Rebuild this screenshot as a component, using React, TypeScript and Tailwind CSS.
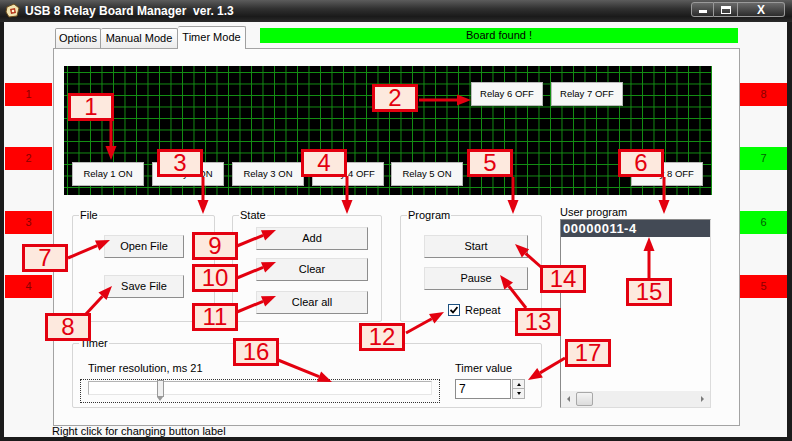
import type { ReactNode } from 'react';

const relays = [
  { label: 'Relay 1 ON', x: 8, y: 96 },
  { label: 'Relay 2 ON', x: 88, y: 96 },
  { label: 'Relay 3 ON', x: 168, y: 96 },
  { label: 'Relay 4 OFF', x: 248, y: 96 },
  { label: 'Relay 5 ON', x: 327, y: 96 },
  { label: 'Relay 6 OFF', x: 407, y: 16 },
  { label: 'Relay 7 OFF', x: 487, y: 16 },
  { label: 'Relay 8 OFF', x: 567, y: 96 },
];

const callouts = [
  { n: 1, x: 68, y: 93 },
  { n: 2, x: 372, y: 84 },
  { n: 3, x: 157, y: 149 },
  { n: 4, x: 301, y: 149 },
  { n: 5, x: 467, y: 149 },
  { n: 6, x: 618, y: 149 },
  { n: 7, x: 22, y: 244 },
  { n: 8, x: 45, y: 313 },
  { n: 9, x: 192, y: 232 },
  { n: 10, x: 192, y: 264 },
  { n: 11, x: 192, y: 303 },
  { n: 12, x: 359, y: 323 },
  { n: 13, x: 515, y: 308 },
  { n: 14, x: 540, y: 265 },
  { n: 15, x: 626, y: 278 },
  { n: 16, x: 233, y: 338 },
  { n: 17, x: 565, y: 339 },
];

const arrows: [number, number, number, number][] = [
  [111, 121, 111, 160],
  [419, 100, 471, 100],
  [203, 177, 203, 214],
  [347, 176, 347, 214],
  [513, 177, 513, 214],
  [664, 177, 664, 214],
  [68, 258, 110, 240],
  [86, 314, 112, 286],
  [237, 246, 276, 230],
  [237, 278, 276, 262],
  [237, 312, 276, 296],
  [406, 333, 444, 312],
  [526, 308, 500, 275],
  [541, 267, 515, 244],
  [649, 278, 649, 237],
  [278, 360, 332, 382],
  [565, 358, 528, 380],
];

const Arrow = ({ a }: { a: [number, number, number, number] }) => {
  const [x1, y1, x2, y2] = a;
  const len = Math.hypot(x2 - x1, y2 - y1);
  const ux = (x2 - x1) / len;
  const uy = (y2 - y1) / len;
  const bx = x2 - ux * 14;
  const by = y2 - uy * 14;
  const pts = `${x2},${y2} ${bx - uy * 5.5},${by + ux * 5.5} ${bx + uy * 5.5},${by - ux * 5.5}`;
  return (
    <g>
      <line x1={x1} y1={y1} x2={bx} y2={by} stroke="#e3000f" strokeWidth={3} />
      <polygon points={pts} fill="#e3000f" />
    </g>
  );
};

const Btn = ({ children, className = '' }: { children: ReactNode; className?: string }) => (
  <div
    className={`flex h-[23px] items-center justify-center border border-t-[#e2e2e2] border-l-[#e2e2e2] border-r-[#8d8d8d] border-b-[#8d8d8d] bg-[#f3f3f3] text-[11px] ${className}`}
  >
    {children}
  </div>
);

const Group = ({ label, className = '', children }: { label: string; className?: string; children?: ReactNode }) => (
  <div className={`relative rounded-[2px] border border-[#d6d6d6] ${className}`}>
    <span className="absolute -top-[8px] left-[6px] bg-[#fcfcfc] px-[1px] text-[11px] leading-[14px]">{label}</span>
    {children}
  </div>
);

const Indicator = ({ n, on }: { n: number; on?: boolean }) => (
  <div
    className={`flex h-[23px] items-center justify-center text-[11px] ${on ? 'bg-[#00ff00] text-[#006000]' : 'bg-[#ff0000] text-[#8a0000]'}`}
  >
    {n}
  </div>
);

const AppIcon = () => (
  <svg width="16" height="16" viewBox="0 0 16 16">
    <path d="M2 4 L9 1 L14 5 L12 13 L4 14 L1 9 Z" fill="#f1e3b0" stroke="#6b4a1a" strokeWidth="1" />
    <path d="M5 6 L10 5 L11 10 L6 11 Z" fill="#b5361c" />
    <circle cx="8" cy="8" r="1.3" fill="#fff6d0" />
  </svg>
);

const TitleBar = () => (
  <div className="flex h-[22px] items-start bg-[linear-gradient(to_bottom,#5c5c5c,#303030_40%,#1a1a1a_75%,#2a2a2a)] pl-[5px] pr-[7px]">
    <div className="mt-[3px]">
      <AppIcon />
    </div>
    <span className="ml-[4px] mt-[4px] whitespace-pre text-[12px] font-bold leading-[14px] text-white">
      USB 8 Relay Board Manager  ver. 1.3
    </span>
    <div className="ml-auto mt-[2px] flex h-[15px]">
      <div className="flex w-[23px] items-end justify-center rounded-l-[3px] border border-[#9a9a9a] bg-[linear-gradient(to_bottom,#6a6a6a,#2c2c2c)] pb-[3px]">
        <div className="h-[3px] w-[8px] bg-white" />
      </div>
      <div className="flex w-[24px] items-center justify-center border border-l-0 border-[#9a9a9a] bg-[linear-gradient(to_bottom,#6a6a6a,#2c2c2c)]">
        <div className="h-[8px] w-[10px] border border-t-[3px] border-white" />
      </div>
      <div className="flex w-[47px] items-center justify-center rounded-r-[3px] border border-l-0 border-[#9a9a9a] bg-[linear-gradient(to_bottom,#6a6a6a,#2c2c2c)] text-[12px] font-bold leading-none text-white">
        X
      </div>
    </div>
  </div>
);

export default function App() {
  return (
    <div className="relative h-[441px] w-[792px] overflow-hidden bg-[#1b1b1b] font-['Liberation_Sans',Arial,sans-serif] text-[11px] text-black">
      <TitleBar />
      <div className="ml-[4px] flex h-[415px] w-[783px] flex-col bg-[#f8f8f8]">
        {/* tab strip + status bar */}
        <div className="flex h-[26px] items-end">
          <div className="ml-[51px] flex items-end">
            <div className="flex h-[20px] w-[46px] items-center justify-center rounded-t-[2px] border border-b-0 border-[#a0a0a0] bg-[linear-gradient(to_bottom,#ffffff,#ececec)]">
              Options
            </div>
            <div className="flex h-[20px] w-[77px] items-center justify-center rounded-t-[2px] border border-b-0 border-l-0 border-[#a0a0a0] bg-[linear-gradient(to_bottom,#ffffff,#ececec)]">
              Manual Mode
            </div>
            <div className="relative -mb-px flex h-[23px] w-[68px] items-start justify-center rounded-t-[2px] border border-b-0 border-l-0 border-[#a0a0a0] bg-[#fcfcfc] pt-[2px]">
              Timer Mode
            </div>
          </div>
          <div className="mb-[5px] ml-[14px] flex h-[15px] w-[478px] items-center justify-center self-end bg-[#00ff00] leading-none">
            Board found !
          </div>
        </div>

        <div className="flex h-[378px]">
          <div className="flex w-[49px] flex-col gap-[41px] pl-[1px] pr-[1px] pt-[35px]">
            <Indicator n={1} />
            <Indicator n={2} />
            <Indicator n={3} />
            <Indicator n={4} />
          </div>

          <div className="h-[378px] w-[687px] border border-[#a3a3a3] bg-[#fcfcfc]">
            <div className="relative ml-[10px] mt-[17px] h-[129px] w-[648px] bg-black bg-[linear-gradient(to_right,#139013_1px,transparent_1px),linear-gradient(to_bottom,#139013_1px,transparent_1px)] bg-[size:11.5px_11.5px] bg-[position:3px_6px]">
              {relays.map((r) => (
                <div
                  key={r.label}
                  className="absolute flex h-[24px] w-[72px] items-center justify-center border border-[#b9b9b9] bg-[#f7f7f7] text-[9.5px]"
                  style={{ left: r.x, top: r.y }}
                >
                  {r.label}
                </div>
              ))}
            </div>

            <div className="flex">
              <div className="ml-[18px] w-[470px] pt-[20px]">
                <div className="flex gap-[17px]">
                  <Group label="File" className="h-[107px] w-[143px] pl-[31px] pt-[19px]">
                    <Btn className="w-[80px]">Open File</Btn>
                    <Btn className="mt-[17px] w-[80px]">Save File</Btn>
                  </Group>
                  <Group label="State" className="h-[107px] w-[150px] pl-[23px] pt-[11px]">
                    <Btn className="w-[112px]">Add</Btn>
                    <Btn className="mt-[8px] w-[112px]">Clear</Btn>
                    <Btn className="mt-[10px] w-[112px]">Clear all</Btn>
                  </Group>
                  <Group label="Program" className="ml-px h-[107px] w-[142px] pl-[23px] pt-[19px]">
                    <Btn className="w-[104px]">Start</Btn>
                    <Btn className="mt-[9px] w-[104px]">Pause</Btn>
                    <div className="ml-[24px] mt-[12px] flex items-center gap-[5px]">
                      <div className="flex h-[12px] w-[12px] items-center justify-center border border-[#1c5180] bg-white">
                        <svg width="8" height="8" viewBox="0 0 8 8">
                          <path d="M0.5 4 L3 6.5 L7.5 1" fill="none" stroke="#000" strokeWidth="1.8" />
                        </svg>
                      </div>
                      <span>Repeat</span>
                    </div>
                  </Group>
                </div>

                <Group label="Timer" className="mt-[21px] flex h-[65px] w-[470px]">
                  <div className="ml-[7px] pt-[17px]">
                    <div className="ml-[8px] leading-[14px]">Timer resolution, ms 21</div>
                    <div className="mt-[4px] h-[24px] w-[360px] border border-dotted border-[#333] px-[7px] pt-[1px]">
                      <div className="relative h-[14px] w-[344px] border border-[#b4b4b4] border-b-[#e6e6e6] border-r-[#e6e6e6] bg-white">
                        <div className="absolute -top-[2px] left-[68px] h-[17px] w-[7px] border border-[#9a9a9a] bg-[#f0f0f0]" />
                        <div className="absolute left-[68px] top-[15px] h-0 w-0 border-x-[3.5px] border-t-[4px] border-x-transparent border-t-[#9a9a9a]" />
                      </div>
                    </div>
                  </div>
                  <div className="ml-[15px] pt-[17px]">
                    <div className="leading-[14px]">Timer value</div>
                    <div className="mt-[4px] flex h-[20px]">
                      <div className="flex w-[56px] items-center border border-[#8c8c8c] bg-white pl-[3px] text-[12px]">7</div>
                      <div className="ml-[1px] flex w-[13px] flex-col">
                        <div className="flex h-[10px] items-center justify-center border border-[#b0b0b0] bg-[#f3f3f3]">
                          <div className="h-0 w-0 border-x-[2.5px] border-b-[3px] border-x-transparent border-b-black" />
                        </div>
                        <div className="flex h-[10px] items-center justify-center border border-t-0 border-[#b0b0b0] bg-[#f3f3f3]">
                          <div className="h-0 w-0 border-x-[2.5px] border-t-[3px] border-x-transparent border-t-black" />
                        </div>
                      </div>
                    </div>
                  </div>
                </Group>
              </div>

              <div className="ml-[18px] w-[151px] pt-[10px]">
                <div className="leading-[14px]">User program</div>
                <div className="flex h-[189px] flex-col border border-[#8a8a8a] border-b-[#dcdcdc] border-r-[#dcdcdc] bg-[#fdfdfd]">
                  <div className="flex h-[17px] items-center bg-[#434a55] pl-[2px] text-[13px] font-bold tracking-[0.5px] text-white">
                    00000011-4
                  </div>
                  <div className="flex-1" />
                  <div className="flex h-[16px] items-center bg-[#efefef] px-[6px]">
                    <div className="h-0 w-0 border-y-[3px] border-r-[3px] border-y-transparent border-r-[#7a7a7a]" />
                    <div className="ml-[6px] h-[14px] w-[17px] rounded-[2px] border border-[#a8a8a8] bg-[linear-gradient(to_bottom,#f4f4f4,#dcdcdc)]" />
                    <div className="ml-auto h-0 w-0 border-y-[3px] border-l-[3px] border-y-transparent border-l-[#7a7a7a]" />
                  </div>
                </div>
              </div>
            </div>
          </div>

          <div className="flex w-[47px] flex-col gap-[41px] pt-[35px]">
            <Indicator n={8} />
            <Indicator n={7} on />
            <Indicator n={6} on />
            <Indicator n={5} />
          </div>
        </div>

        <div className="ml-[48px] leading-[11px]">Right click for changing button label</div>
      </div>

      {/* annotation overlay */}
      <svg className="pointer-events-none absolute inset-0" width="792" height="441">
        {arrows.map((a, i) => (
          <Arrow key={i} a={a} />
        ))}
      </svg>
      {callouts.map((c) => (
        <div
          key={c.n}
          className="absolute flex h-[28px] w-[46px] items-center justify-center border-[3px] border-[#e3000f] bg-[#fde9de] text-[24px] leading-none text-[#e3000f]"
          style={{ left: c.x, top: c.y }}
        >
          {c.n}
        </div>
      ))}
    </div>
  );
}
